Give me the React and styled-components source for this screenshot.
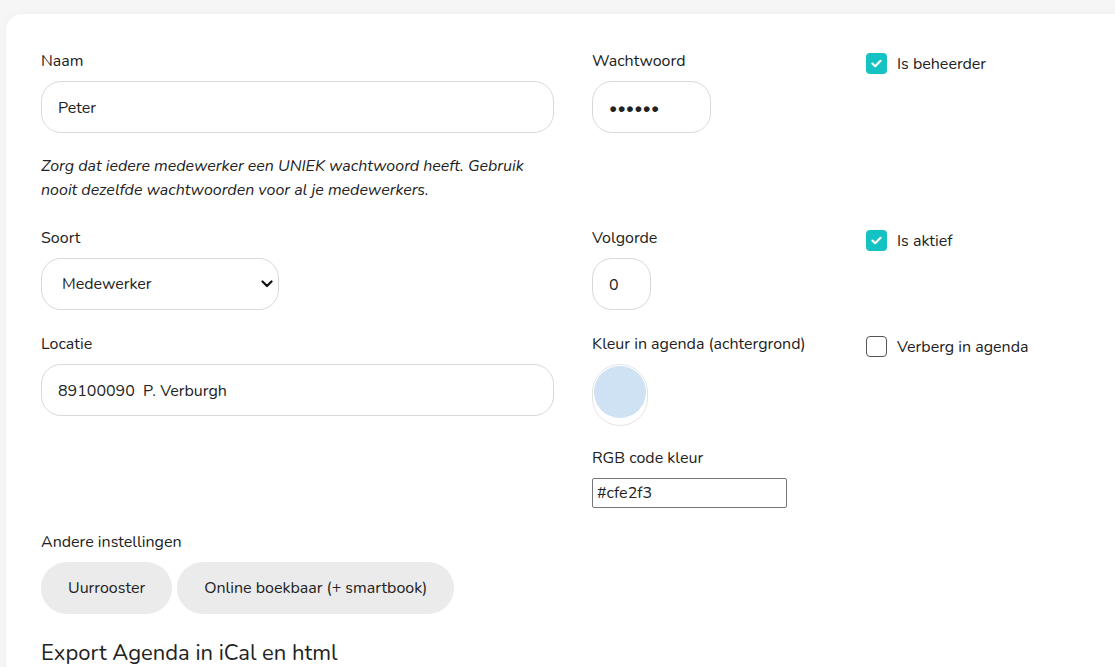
import React from "react";
import styled, { createGlobalStyle } from "styled-components";

const Global = createGlobalStyle`
  html, body { margin: 0; padding: 0; background: #f6f6f6; }
  body { font-family: "Nunito", Lato, "Noto Sans", sans-serif; color: #222; }
  * { box-sizing: border-box; }
`;

const Page = styled.div`
  padding: 14px 0 0 6px;
  min-height: 667px;
  overflow: hidden;
`;

const Card = styled.div`
  background: #fff;
  border-radius: 16px 0 0 0;
  box-shadow: 0 0 8px rgba(0, 0, 0, 0.04);
  padding: 37px 0 40px 35px;
  min-height: 700px;
`;

const Grid = styled.div`
  display: grid;
  grid-template-columns: 513px 236px 1fr;
  column-gap: 38px;
  row-gap: 24px;
  align-items: start;
`;

const Field = styled.div`
  display: flex;
  flex-direction: column;
`;

const Label = styled.label`
  font-size: 16px;
  line-height: 20px;
  height: 20px;
  margin-bottom: 10px;
  color: #222;
  white-space: nowrap;
`;

const TextInput = styled.input`
  height: 52px;
  width: ${(p) => p.$w || "100%"};
  border: 1px solid #d9d9d9;
  border-radius: 20px;
  padding: 1px 16px 0;
  font-family: inherit;
  font-size: 16px;
  color: #222;
  background: #fff;
  outline: none;
`;

const Help = styled.p`
  margin: 21px 0 2px;
  font-size: 16px;
  line-height: 24px;
  font-style: italic;
  color: #222;
`;

const SelectWrap = styled.div`
  position: relative;
  width: 238px;
`;

const Select = styled.select`
  appearance: none;
  width: 100%;
  height: 52px;
  border: 1px solid #d9d9d9;
  border-radius: 20px;
  padding: 0 20px;
  font-family: inherit;
  font-size: 16px;
  color: #222;
  background: #fff;
  outline: none;
`;

const Chevron = styled.svg`
  position: absolute;
  right: 6px;
  top: 22px;
  pointer-events: none;
`;

const CheckRow = styled.label`
  display: flex;
  align-items: center;
  gap: 10px;
  margin-top: 2px;
  font-size: 16px;
  line-height: 20px;
  color: #222;
  white-space: nowrap;
`;

const Box = styled.span`
  width: 21px;
  height: 21px;
  border-radius: 4px;
  display: flex;
  align-items: center;
  justify-content: center;
  background: ${(p) => (p.$checked ? "#14c2c4" : "#fff")};
  border: ${(p) => (p.$checked ? "none" : "1px solid #555")};
  flex: none;
`;

const Swatch = styled.div`
  width: 56px;
  height: 62px;
  border: 1px solid #e4e4e4;
  border-radius: 28px;
  padding: 1px;
  margin-bottom: 22px;
`;

const Dot = styled.div`
  width: 52px;
  height: 52px;
  border-radius: 50%;
  background: ${(p) => p.$color};
`;

const HexInput = styled.input`
  width: 195px;
  height: 30px;
  border: 1px solid #767676;
  border-radius: 2px;
  padding: 0 4px;
  font-family: inherit;
  font-size: 16px;
  color: #222;
  outline: none;
`;

const Buttons = styled.div`
  display: flex;
  gap: 5px;
`;

const Pill = styled.button`
  height: 52px;
  border: none;
  border-radius: 26px;
  background: #ebebeb;
  padding: 0 27px;
  font-family: inherit;
  font-size: 16px;
  color: #222;
`;

const Heading = styled.h2`
  margin: 25px 0 0;
  font-weight: 400;
  font-size: 22px;
  line-height: 28px;
  color: #222;
`;

const Check = () => (
  <svg width="11" height="9" viewBox="0 0 11 9">
    <path d="M1.5 4.6 L4.2 7.2 L9.5 1.8" fill="none" stroke="#fff" strokeWidth="2.2" strokeLinecap="round" strokeLinejoin="round" />
  </svg>
);

const Checkbox = ({ checked, children }) => (
  <CheckRow>
    <Box $checked={checked}>{checked && <Check />}</Box>
    {children}
  </CheckRow>
);

export default function App() {
  return (
    <Page>
      <Global />
      <Card>
        <Grid>
          <Field>
            <Label>Naam</Label>
            <TextInput defaultValue="Peter" />
            <Help>
              Zorg dat iedere medewerker een UNIEK wachtwoord heeft. Gebruik nooit dezelfde wachtwoorden voor al je medewerkers.
            </Help>
          </Field>
          <Field>
            <Label>Wachtwoord</Label>
            <TextInput type="password" defaultValue="geheim" $w="119px" />
          </Field>
          <Checkbox checked>Is beheerder</Checkbox>

          <Field>
            <Label>Soort</Label>
            <SelectWrap>
              <Select defaultValue="Medewerker">
                <option>Medewerker</option>
                <option>Beheerder</option>
              </Select>
              <Chevron width="12" height="8" viewBox="0 0 12 8">
                <path d="M1.5 1.5 L6 6 L10.5 1.5" fill="none" stroke="#111" strokeWidth="2.2" strokeLinecap="round" strokeLinejoin="round" />
              </Chevron>
            </SelectWrap>
          </Field>
          <Field>
            <Label>Volgorde</Label>
            <TextInput defaultValue="0" $w="59px" />
          </Field>
          <Checkbox checked>Is aktief</Checkbox>

          <Field>
            <Label>Locatie</Label>
            <TextInput defaultValue="89100090  P. Verburgh" />
          </Field>
          <Field>
            <Label>Kleur in agenda (achtergrond)</Label>
            <Swatch>
              <Dot $color="#cfe2f3" />
            </Swatch>
            <Label>RGB code kleur</Label>
            <HexInput defaultValue="#cfe2f3" />
          </Field>
          <Checkbox>Verberg in agenda</Checkbox>

          <Field>
            <Label>Andere instellingen</Label>
            <Buttons>
              <Pill>Uurrooster</Pill>
              <Pill>Online boekbaar (+ smartbook)</Pill>
            </Buttons>
          </Field>
        </Grid>
        <Heading>Export Agenda in iCal en html</Heading>
      </Card>
    </Page>
  );
}
